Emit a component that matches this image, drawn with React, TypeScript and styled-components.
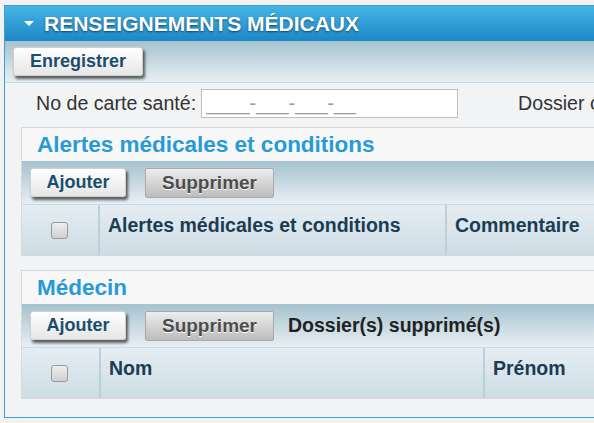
import styled, { createGlobalStyle } from "styled-components";

const GlobalStyle = createGlobalStyle`
  html, body {
    margin: 0;
    padding: 0;
    background: #f2f2f2;
    overflow: hidden;
    font-family: "Liberation Sans", Arial, sans-serif;
  }
`;

const Page = styled.div`
  padding: 5px 0 0 4px;
`;

const Panel = styled.div`
  width: 780px;
  border: 1px solid #3a9fd9;
  background: #f2f3f5;
`;

const PanelHeader = styled.div`
  display: flex;
  align-items: center;
  height: 35px;
  padding-left: 19px;
  background: linear-gradient(#46b5e4, #1b87c6);
  color: #ffffff;
  font-weight: 700;
  font-size: 21px;
  text-shadow: 0 1px 2px rgba(0, 0, 0, 0.55);
`;

const Caret = styled.span`
  width: 0;
  height: 0;
  border-left: 5px solid transparent;
  border-right: 5px solid transparent;
  border-top: 5px solid #ffffff;
  margin-right: 10px;
`;

const Toolbar = styled.div<{ height: number; pad: number }>`
  display: flex;
  align-items: center;
  gap: 19px;
  height: ${props => props.height}px;
  padding-left: ${props => props.pad}px;
  box-sizing: border-box;
  background: linear-gradient(#a5c2cf, #e8eff3);
  border-bottom: 1px solid #c4dce7;
`;

const Button = styled.button<{ width: number }>`
  width: ${props => props.width}px;
  height: 29px;
  padding: 0;
  background: linear-gradient(#ffffff, #e6e6e6);
  border: 1px solid #cfcfcf;
  border-radius: 3px;
  box-shadow: 2px 3px 3px rgba(0, 0, 0, 0.6);
  font-family: inherit;
  font-weight: 700;
  font-size: 18px;
  color: #1b4e6d;
  cursor: pointer;
`;

const DisabledButton = styled.button<{ width: number }>`
  width: ${props => props.width}px;
  height: 30px;
  padding: 0;
  background: linear-gradient(#ededed, #bcbcbc);
  border: 1px solid #a9a9a9;
  border-radius: 2px;
  font-family: inherit;
  font-weight: 700;
  font-size: 19px;
  color: #4d4d4d;
  text-shadow: 0 1px 0 #ffffff;
`;

const Content = styled.div`
  padding-bottom: 4px;
`;

const FieldRow = styled.div`
  display: flex;
  align-items: center;
  height: 44px;
  padding: 0 0 3px 31px;
  box-sizing: border-box;
  font-size: 19.6px;
  color: #333333;
`;

const FieldLabel = styled.label<{ gap?: number }>`
  margin-left: ${props => props.gap ?? 0}px;
  margin-right: 5px;
  white-space: nowrap;
`;

const TextInput = styled.input`
  width: 257px;
  height: 29px;
  box-sizing: border-box;
  padding: 0 4px;
  border: 1px solid #bdbdbd;
  background: #ffffff;
  font-family: inherit;
  font-size: 19.5px;
  color: #333;
  outline: none;

  &::placeholder {
    color: #9a9a9a;
  }
`;

const Section = styled.div`
  margin: 0 0 14px 16px;
  border: 1px solid #d8d8d8;
  border-right: none;
  background: #f7f7f7;
`;

const SectionTitle = styled.div`
  display: flex;
  align-items: center;
  height: 33px;
  padding-left: 15px;
  background: #f7f7f7;
  color: #279bd6;
  font-weight: 700;
  font-size: 22.5px;
`;

const Notice = styled.span`
  margin-left: -5px;
  font-weight: 700;
  font-size: 19.5px;
  color: #222222;
`;

const HeaderRow = styled.div<{ cols: string }>`
  display: grid;
  grid-template-columns: ${props => props.cols};
  height: 50px;
  background: linear-gradient(#e5edf2, #cddce5);
`;

const HeaderCell = styled.div`
  padding: 9px 0 0 8px;
  border-left: 2px solid #bcd0da;
  font-weight: 700;
  font-size: 19.5px;
  color: #1b3c52;
  white-space: nowrap;
`;

const CheckCell = styled.div`
  display: flex;
  align-items: center;
  justify-content: center;
  padding-right: 2px;
`;

const Checkbox = styled.span`
  width: 15px;
  height: 15px;
  border: 1px solid #9a9a9a;
  border-radius: 3px;
  background: linear-gradient(#eeeeee, #d0d0d0);
`;

const App = () => {
  return (
    <Page>
      <GlobalStyle />
      <Panel>
        <PanelHeader>
          <Caret />
          RENSEIGNEMENTS MÉDICAUX
        </PanelHeader>
        <Toolbar height={42} pad={8}>
          <Button width={130}>Enregistrer</Button>
        </Toolbar>
        <Content>
          <FieldRow>
            <FieldLabel>No de carte santé:</FieldLabel>
            <TextInput placeholder="____-___-___-__" />
            <FieldLabel gap={60}>Dossier clinique:</FieldLabel>
            <TextInput />
          </FieldRow>

          <Section>
            <SectionTitle>Alertes médicales et conditions</SectionTitle>
            <Toolbar height={44} pad={8}>
              <Button width={96}>Ajouter</Button>
              <DisabledButton width={129}>Supprimer</DisabledButton>
            </Toolbar>
            <HeaderRow cols="76px 347px 1fr">
              <CheckCell><Checkbox /></CheckCell>
              <HeaderCell>Alertes médicales et conditions</HeaderCell>
              <HeaderCell>Commentaire</HeaderCell>
            </HeaderRow>
          </Section>

          <Section>
            <SectionTitle>Médecin</SectionTitle>
            <Toolbar height={44} pad={8}>
              <Button width={96}>Ajouter</Button>
              <DisabledButton width={129}>Supprimer</DisabledButton>
              <Notice>Dossier(s) supprimé(s)</Notice>
            </Toolbar>
            <HeaderRow cols="77px 384px 1fr">
              <CheckCell><Checkbox /></CheckCell>
              <HeaderCell>Nom</HeaderCell>
              <HeaderCell>Prénom</HeaderCell>
            </HeaderRow>
          </Section>
        </Content>
      </Panel>
    </Page>
  );
};

export default App;
